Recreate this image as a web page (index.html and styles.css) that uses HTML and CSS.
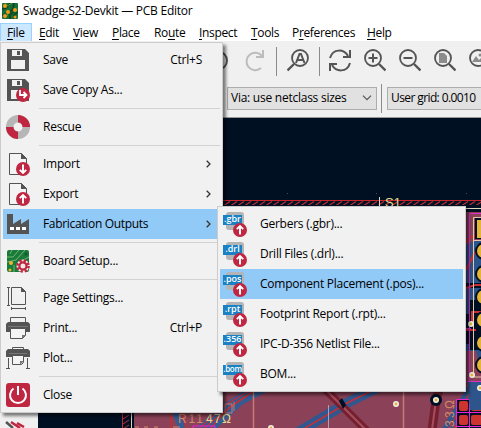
FILE: index.html
```html
<!DOCTYPE html>
<html lang="en">
<head>
<meta charset="utf-8">
<title>Swadge-S2-Devkit — PCB Editor</title>
<link rel="stylesheet" href="styles.css">
</head>
<body>
<svg class="defs" width="0" height="0">
  <defs>
    <g id="floppy"><path fill="#545454" d="M0 0h18l4 4v18H0z"/><path fill="#f1f1f1" d="M4 11h14v9H4zM5 1h10v6H5z"/><path fill="#545454" d="M10 2h3v4h-3z"/></g>
    <g id="page"><path fill="#f4f4f4" stroke="#545454" d="M.5.5h12l5 5v16H.5z"/><path fill="#545454" d="M12 0l6 6h-6z"/></g>
    <g id="up"><circle r="7" fill="#bf2641"/><path d="M0 4.500v-8M-3.200-.8L0-4l3.200 3.200" fill="none" stroke="#fff" stroke-width="1.900"/></g>
    <g id="lens" fill="none" stroke="#545454"><circle cx="9" cy="9" r="8" stroke-width="1.800"/><path d="M15 15l6.500 6.500" stroke-width="2.400"/></g>
    <g id="via"><circle r="3" fill="#f3efe9"/><circle r="1.400" fill="#e2b43a"/></g>
  </defs>
</svg>
<div class="window">
  <header class="title">
    <svg width="16" height="16" viewBox="0 0 16 16"><rect width="16" height="16" rx="1" fill="#176d35"/><g fill="none" stroke="#0a4220" stroke-width="1.500"><path d="M0 6l4-1 4-5M0 12l6-1 5-5 1-6M8 16v-4l6-5M12 16v-4l4-3"/></g><path d="M3 0l2 3 5-3M7 8l-2 5" stroke="#4d9b43" fill="none"/><g fill="#f39a1e"><circle cx="3" cy="3" r="2"/><circle cx="3" cy="13" r="2"/><circle cx="6" cy="9" r="2"/><circle cx="13" cy="7" r="2"/><circle cx="13" cy="14" r="1.500"/></g></svg>
    <span>Swadge-S2-Devkit — PCB Editor</span>
  </header>
  <nav class="menubar">
    <span class="open"><u>F</u>ile</span><span><u>E</u>dit</span><span><u>V</u>iew</span><span><u>P</u>lace</span><span>Ro<u>u</u>te</span><span><u>I</u>nspect</span><span><u>T</u>ools</span><span>P<u>r</u>eferences</span><span><u>H</u>elp</span>
  </nav>
  <div class="toolbar">
    <svg width="40" height="28" viewBox="205 47 40 28"><path d="M218 51.500a9 9 0 0 1 0 18" fill="none" stroke="#545454" stroke-width="2"/></svg>
    <svg class="redo" width="20" height="24" viewBox="0 0 20 24"><path d="M16 20a8.700 8.700 0 1 1 1-12" fill="none" stroke="#bcbcbc" stroke-width="2"/><path d="M18 2v7h-7" fill="none" stroke="#bcbcbc" stroke-width="2"/></svg>
    <i class="rule r1"></i>
    <svg class="find" width="22" height="23"><g fill="none" stroke="#545454"><circle cx="13" cy="9" r="8" stroke-width="1.800"/><path d="M7 15l-6.500 6.500" stroke-width="2.400"/></g><path d="M9 14l3.500-9h1.500l3.500 9M10.500 11h5.500" fill="none" stroke="#545454" stroke-width="2"/></svg>
    <i class="rule r2"></i>
    <svg class="sync" width="22" height="24" viewBox="0 0 22 24"><g fill="none" stroke="#545454" stroke-width="2"><path d="M1 9C4-1 15 0 19 7M21 1v7h-7M21 14C18 24 7 23 3 16M1 22v-7h7"/></g></svg>
    <svg class="z" width="22" height="23"><use href="#lens"/><path d="M9 4.500v9M4.500 9h9" stroke="#545454" stroke-width="2"/></svg>
    <svg class="z" width="22" height="23"><use href="#lens"/><path d="M4.500 9h9" stroke="#545454" stroke-width="2"/></svg>
    <svg class="z" width="22" height="23"><use href="#lens"/><path d="M5 4h5l3 3v7H5z" fill="#8c8c8c"/></svg>
    <svg class="z" width="22" height="23"><use href="#lens"/><path d="M3 13l4-6 3 4 2-2 3 4z" fill="#8c8c8c"/><circle cx="11" cy="6" r="1.500" fill="#8c8c8c"/></svg>
  </div>
  <div class="selectors">
    <div class="select via"><span>Via: use netclass sizes</span><svg width="10" height="6"><path d="M1 .7l4 4 4-4" fill="none" stroke="#555" stroke-width="1.200"/></svg></div>
    <i class="rule"></i>
    <div class="select grid"><span>User grid: 0.0010</span></div>
  </div>
  <main class="work">
    <div class="side"><svg width="37" height="310"><path d="M6 304l7 6" stroke="#545454" stroke-width="2.500"/><path d="M11 304l9 6M17 305l7 4" stroke="#bf2641" stroke-width="2.500"/></svg></div>
    <svg class="board" width="443" height="310" viewBox="38 118 443 310">
      <defs><pattern id="hatch" width="7" height="5" patternUnits="userSpaceOnUse" y="201"><path d="M0 4.500L6 .5" stroke="#b82d35" stroke-width="1.200"/></pattern></defs>
      <path fill="#001023" d="M38 118h443v310H38z"/>
      <g fill="#42515b"><path d="M287 193h1v1h-1zM376 193h1v1h-1zM466 193h1v1h-1z"/></g>
      <path fill="url(#hatch)" d="M134 201h347v4H134z"/><path d="M134 200.500h347" stroke="#cb252c" stroke-width="1.200"/>
      <path d="M379.500 197v9M466 208.500h15" stroke="#dcdbbd"/>
      <text class="silk" x="385" y="207" font-size="13">S1</text>
      <path fill="#8b4259" d="M134 212h347v216H134z"/>
      <path d="M123 413l6-3m-6 9l6-4m-6 9l6-4m-6 9l6-4M122.500 411v17" stroke="#b82d35"/><path d="M131.500 411v17" stroke="#d9d3bb"/>
      <g fill="none">
        <path d="M174 408l8 20M199 430l28-24 34-22M210 430l30-28 30-16" stroke="#355b93" stroke-width="7"/>
        <path d="M171 408v20M180 409l7 20M197 430l30-26 34-20M202 430l29-24 30-20M209 430l20-22 30-20" stroke="#c92e35" stroke-width="1.300"/>
        <path d="M295 434l54-32 40-20" stroke="#31578e" stroke-width="10"/><path d="M295 434l54-32 40-20" stroke="#c92e35" stroke-width="1.500"/>
        <path d="M320 384l48 48" stroke="#74202f" stroke-width="8"/><path d="M320 384l48 48" stroke="#a74c60" stroke-width="2"/>
        <path d="M440 386l-4 14-4 30" stroke="#74202f" stroke-width="9"/><path d="M436 400l-4 30" stroke="#a74c60" stroke-width="2"/>
        <path d="M253.500 390v38M403.500 390v38" stroke="#c77c73" stroke-width="1.500"/><path d="M328.500 405v23" stroke="#aaa1b2"/>
        <path d="M483 370l-38 62" stroke="#31578e" stroke-width="9"/><path d="M483 370l-35 60M487 373l-35 60" stroke="#c92e35" stroke-width="1.300"/>
      </g>
      <path fill="#001023" d="M339 401l3-3 4 7-3 4z"/>
      <g stroke="#c77c73" fill="none"><path d="M225 404h7v9h-7v-9M234 402v9"/></g>
      <text class="silk" x="178" y="423" font-size="12" textLength="25"><tspan fill="#d48a67">R11</tspan></text><text class="silk" x="206" y="423" font-size="12" textLength="25">47Ω</text>
      <path d="M193 428v-2h22v2" fill="none" stroke="#ed21d8"/><path d="M135 427h4m5 0h4m6 0h4m15 0h7" stroke="#d48a67"/>
      <use href="#via" x="271" y="428"/><use href="#via" x="396" y="404"/>
      <circle cx="436" cy="400" r="6" fill="#001023"/><use href="#via" x="436" y="400"/>
      <text class="silk ohm" font-size="12" transform="translate(454 427) rotate(-90)" textLength="27">33Ω</text>
      <path fill="#001023" d="M457 399h24v29h-24z"/>
      <g fill="#cd3430"><rect x="459" y="401" width="9" height="10" rx="2"/><rect x="471" y="401" width="11" height="10" rx="2"/><rect x="459" y="415" width="9" height="10" rx="2"/><rect x="471" y="415" width="11" height="10" rx="2"/></g>
      <path d="M456.500 427v-27.500h25M456.500 412.500h25M456.500 426.500h25M469.500 399v29" stroke="#ed21d8" fill="none"/>
      <path fill="#2d548b" d="M466 245l10-5h5v170h-11l-4-50z"/><path fill="#001023" d="M466 283h15v5h-15zM470 300h11v50h-11zM466 314h5v30h-5z"/><path fill="#8b4259" d="M466 351h10l5 20v10h-15z"/>
      <path d="M465 242l8-6 8-3M466 270l8-16 7-10M466 288l9-3h6M466 330h10M472 325v-13h9" stroke="#c92e35" stroke-width="2" fill="none"/>
      <path d="M469.500 381V213.500H481M466 328.500h5M467 381.500h14" stroke="#dc30c6" fill="none"/><path d="M481 217.500h-7.500v23h7.500M473.500 240v137h8" stroke="#e5c6a8" fill="none"/>
      <rect x="475" y="218" width="9" height="21" fill="#001023"/><rect x="477" y="220" width="9" height="18" fill="#e4b536"/>
      <g fill="#e4b536" stroke="#001023" stroke-width="2"><circle cx="484" cy="251" r="8"/><circle cx="484" cy="274" r="8"/><circle cx="484" cy="297" r="8"/><circle cx="484" cy="320" r="8"/><circle cx="484" cy="343" r="8"/><circle cx="484" cy="365" r="8"/></g>
      <use href="#via" x="471" y="324"/><use href="#via" x="472" y="375"/><use href="#via" x="480" y="388"/>
    </svg>
  </main>
</div>

<section class="popup file">
  <div class="row"><svg class="ic" viewBox="0 0 30 30"><use href="#floppy" x="4" y="4"/></svg><span>Save</span><kbd>Ctrl+S</kbd></div>
  <div class="row"><svg class="ic" viewBox="0 0 30 30"><use href="#floppy" x="4" y="4"/><circle cx="20" cy="20" r="7" fill="#bf2641"/><path d="M17 15v5h6M20.500 17l3 3-3 3" fill="none" stroke="#fff" stroke-width="1.800"/></svg><span>Save Copy As...</span></div>
  <hr>
  <div class="row"><svg class="ic" viewBox="0 0 30 30"><g fill="none" stroke-width="7.500"><circle cx="15" cy="15" r="8.300" stroke="#b6b6b6"/><path d="M15 6.700a8.300 8.300 0 0 1 8.300 8.300M15 23.300A8.300 8.300 0 0 1 6.700 15" stroke="#bf2641"/></g></svg><span>Rescue</span></div>
  <hr>
  <div class="row"><svg class="ic" viewBox="0 0 30 30"><use href="#page" x="6" y="4"/><use href="#up" transform="translate(20 20) rotate(180)"/></svg><span>Import</span><svg class="arrow" viewBox="0 0 5 8"><path d="M.7.700L4 4 .7 7.300"/></svg></div>
  <div class="row"><svg class="ic" viewBox="0 0 30 30"><use href="#page" x="6" y="4"/><use href="#up" x="20" y="20"/></svg><span>Export</span><svg class="arrow" viewBox="0 0 5 8"><path d="M.7.700L4 4 .7 7.300"/></svg></div>
  <div class="row hot"><svg class="ic" viewBox="0 0 30 30"><path fill="#545454" d="M4 5h6v10l8-5v5l8-5v15H4z"/><path fill="#fff" d="M7 18h4v3H7zM13 18h4v3h-4zM19 18h4v3h-4z"/></svg><span class="tight">Fabrication Outputs</span><svg class="arrow" viewBox="0 0 5 8"><path d="M.7.700L4 4 .7 7.300"/></svg></div>
  <hr>
  <div class="row"><svg class="ic" viewBox="0 0 30 30"><rect x="4" y="4" width="22" height="22" rx="2" fill="#187b3b"/><path d="M4 11h6l6-7M4 16l9-2 9-10M9 4l-2 4M26 11l-6 3M11 26v-7" fill="none" stroke="#74b66f"/><circle cx="8" cy="17" r="2" fill="#f5b334"/><circle cx="7" cy="24" r="1.500" fill="#f5b334"/><circle cx="23" cy="8" r="1.500" fill="#145b2c"/><circle cx="20" cy="20" r="6.500" fill="#f3e9e7"/><circle cx="20" cy="20" r="5.600" fill="none" stroke="#bf2641" stroke-width="2.500" stroke-dasharray="2.400 1.998"/><circle cx="20" cy="20" r="3.600" fill="#f3e9e7" stroke="#bf2641" stroke-width="2.200"/></svg><span>Board Setup...</span></div>
  <hr>
  <div class="row"><svg class="ic" viewBox="0 0 30 30"><path d="M8.500 4.500h10l4 4v13h-14zM5.500 4v18M4 4.500h3M4 22.500h3M8 25.500h15M8.500 24v3M22.500 24v3" fill="none" stroke="#545454"/><path d="M18 4l5 5h-5z" fill="#545454"/></svg><span>Page Settings...</span></div>
  <div class="row"><svg class="ic" viewBox="0 0 30 30"><path d="M7.500 10V4.500h15V10" fill="none" stroke="#545454"/><path d="M5 9h20l2 2v8H3v-8z" fill="#545454"/><path d="M7.500 15.500h15v7l-3 3h-12z" fill="#f4f4f4" stroke="#545454"/><path d="M19 26v-4h4zM5 13h20v1H5z" fill="#777"/></svg><span>Print...</span><kbd>Ctrl+P</kbd></div>
  <div class="row"><svg class="ic" viewBox="0 0 30 30"><path d="M9.500 7V4.500h11V7M5.500 15v10.500M24.500 15v10.500M3 25.500h4M23 25.500h4" fill="none" stroke="#545454"/><path d="M5 6h20l2 2v6H3V8z" fill="#545454"/><path d="M9.500 12.500h11v7l-2 2h-9z" fill="#f4f4f4" stroke="#545454"/><path d="M17 22v-4h4zM6 10h18v1H6z" fill="#777"/></svg><span>Plot...</span></div>
  <hr>
  <div class="row"><svg class="ic" viewBox="0 0 30 30"><rect x="3" y="3" width="24" height="24" rx="3" fill="#bf2641"/><path d="M10.500 8.500a8 8 0 1 0 9 0M15 6v9" fill="none" stroke="#fff" stroke-width="2"/></svg><span>Close</span></div>
</section>

<section class="popup fab">
  <div class="row"><span class="fmt"><i></i><b>.gbr</b><svg width="14" height="14" viewBox="-7 -7 14 14"><use href="#up"/></svg></span><span>Gerbers (.gbr)...</span></div>
  <div class="row"><span class="fmt"><i></i><b>.drl</b><svg width="14" height="14" viewBox="-7 -7 14 14"><use href="#up"/></svg></span><span>Drill Files (.drl)...</span></div>
  <div class="row hot"><span class="fmt"><i></i><b>.pos</b><svg width="14" height="14" viewBox="-7 -7 14 14"><use href="#up"/></svg></span><span>Component Placement (.pos)...</span></div>
  <div class="row"><span class="fmt"><i></i><b>.rpt</b><svg width="14" height="14" viewBox="-7 -7 14 14"><use href="#up"/></svg></span><span>Footprint Report (.rpt)...</span></div>
  <div class="row"><span class="fmt"><i></i><b>.356</b><svg width="14" height="14" viewBox="-7 -7 14 14"><use href="#up"/></svg></span><span>IPC-D-356 Netlist File...</span></div>
  <div class="row"><span class="fmt"><i></i><b class="wide">.bom</b><svg width="14" height="14" viewBox="-7 -7 14 14"><use href="#up"/></svg></span><span>BOM...</span></div>
</section>
</body>
</html>
```
FILE: styles.css
```css
* { box-sizing: border-box; }
body { margin: 0; width: 481px; height: 428px; overflow: hidden; position: relative; background: #fff; color: #000; font: 12px/16px "Open Sans", "Noto Sans", sans-serif; letter-spacing: -0.25px; }
svg { display: block; flex: none; }
.defs { position: absolute; }
.window { width: 481px; height: 428px; overflow: hidden; display: flex; flex-direction: column; }
.title { height: 23px; flex: none; display: flex; align-items: center; gap: 5px; padding: 0 0 1px 2px; }
.menubar { height: 18px; flex: none; display: grid; grid-template-columns: 32px 34px 39px 42px 45px 52px 41px 75px 39px; line-height: 19px; }
.menubar span { padding-left: 7px; white-space: nowrap; letter-spacing: -0.35px; }
.menubar .open { background: #cce8ff; box-shadow: inset 0 0 0 1px #99d1ff; }
u { text-decoration: underline; text-underline-offset: 2px; text-decoration-thickness: 1px; text-decoration-skip-ink: none; }
.toolbar { height: 41px; flex: none; background: #f0f0f0; display: flex; padding: 6px 0 0 205px; overflow: hidden; }
.redo { margin: 1px 0 0 0; }
.rule { display: block; flex: none; width: 1px; height: 29px; background: #8b8b8b; }
.r1 { margin-left: 11px; }
.find { margin: 2px 0 0 10px; }
.r2 { margin-left: 10px; }
.sync { margin: 2px 0 0 9px; }
.sync + .z { margin-left: 13px; }
.z { margin: 2px 13px 0 0; }
.selectors { height: 35px; flex: none; background: #f0f0f0; display: flex; align-items: flex-start; padding: 2px 0 0 227px; }
.select { margin-top: 3px; height: 23px; border: 1px solid #adadad; background: #e1e1e1; display: flex; align-items: center; justify-content: space-between; padding: 0 4px 1px 3px; white-space: nowrap; flex: none; }
.via { width: 150px; }
.selectors .rule { margin: 0 5px 0 4px; }
.grid { width: 94px; border-right: 0; padding-right: 0; letter-spacing: -0.6px; }
.work { display: flex; flex: none; height: 311px; border-top: 1px solid #999; }
.side { width: 38px; flex: none; background: #f0f0f0; }
.silk { font-family: "Liberation Sans", sans-serif; fill: #e0dc91; letter-spacing: 0; }
.ohm { fill: #d48a67; }
.popup { position: absolute; background: #f1f1f1; border: 1px solid #ccc; padding: 2px; box-shadow: 3px 3px 3px rgba(0,0,0,.5); }
.file { left: 0; top: 42px; width: 223px; height: 371px; }
.fab { left: 217px; top: 206px; width: 249px; height: 186px; }
.row { height: 30px; display: flex; align-items: center; white-space: nowrap; }
.tight { letter-spacing: -0.32px; }
.hot { background: #91c9f7; }
.ic { width: 30px; height: 30px; margin-right: 10px; }
.row kbd { font: inherit; margin-left: auto; margin-right: 18px; }
.arrow { width: 5px; height: 8px; margin-left: auto; margin-right: 9px; }
.arrow path { fill: none; stroke: #333; stroke-width: 1.3; }
hr { height: 1px; border: 0; margin: 3px 0 3px 36px; background: #d2d2d2; }
.fmt { width: 37px; height: 30px; margin: 0 0 0 3px; padding: 6px 0 0; position: relative; }
.fmt i { position: absolute; left: 3px; top: 3px; width: 18px; height: 18px; border-radius: 3px; background: #b4b4b4; }
.fmt b { position: relative; display: block; width: 19px; height: 10px; background: #1a81c4; color: #fff; font: 600 9px/8px "Open Sans", sans-serif; letter-spacing: 0; text-align: center; }
.fmt .wide { font-size: 8px; letter-spacing: -0.3px; }
.fmt svg { position: absolute; left: 10px; top: 14px; }
```
